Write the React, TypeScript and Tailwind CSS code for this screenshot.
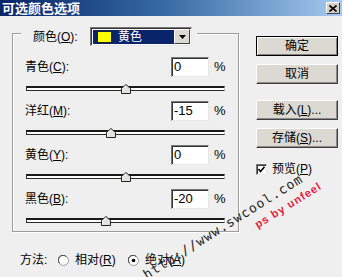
import React from "react";

const cjk = "font-['Liberation_Sans','Noto_Sans_CJK_SC',sans-serif]";

function Mn({ c }: { c: string }) {
  return <span className="underline underline-offset-[1px]">{c}</span>;
}

function Thumb({ value }: { value: number }) {
  // track spans -100..100
  const left = Math.round(((value + 100) / 200) * 197) - 5;
  return (
    <svg
      className="absolute top-[-4px]"
      style={{ left }}
      width="10"
      height="10"
      viewBox="0 0 10 10"
    >
      <polygon points="0.5,9.5 0.5,4.5 5,0.5 9.5,4.5 9.5,9.5" fill="#e4e2dc" stroke="#222" />
      <polyline points="1.5,8.5 1.5,5 5,1.8" fill="none" stroke="#fff" />
    </svg>
  );
}

function SliderRow({
  label,
  mn,
  value,
  last,
}: {
  label: string;
  mn: string;
  value: number;
  last?: boolean;
}) {
  return (
    <div>
      <div className="flex h-[20px] items-center">
        <div className="w-[146px] text-[12px] leading-none text-black">
          {label}(<Mn c={mn} />):
        </div>
        <div className="flex h-[20px] w-[38px] items-center border border-t-[#777] border-l-[#777] border-r-[#e6e6e6] border-b-[#e6e6e6] bg-white pl-[2px] font-['Liberation_Sans',sans-serif] text-[13px] text-black shadow-[inset_1px_1px_0_#333]">
          {value}
        </div>
        <span className="ml-[5px] font-['Liberation_Sans',sans-serif] text-[13px] text-black">%</span>
      </div>
      <div className={last ? "h-[22px] pt-[9px]" : "h-[24px] pt-[9px]"}>
        <div className="relative ml-[1px] h-[5px] w-[199px] border-t-2 border-b border-l border-r border-t-[#1a1a1a] border-b-[#2a2a2a] border-l-[#333] border-r-[#ccc] bg-white">
          <Thumb value={value} />
        </div>
      </div>
    </div>
  );
}

function Btn({ children, primary }: { children: React.ReactNode; primary?: boolean }) {
  return (
    <div
      className={
        "flex h-[20px] w-[82px] items-center justify-center bg-[#dcd9d2] text-[12px] text-black " +
        (primary
          ? "border border-black shadow-[inset_1px_1px_0_#fff,inset_-1px_-1px_0_#808080]"
          : "border border-t-white border-l-white border-r-[#404040] border-b-[#404040] shadow-[inset_-1px_-1px_0_#8a8a8a]")
      }
    >
      {children}
    </div>
  );
}

function Radio({ on }: { on?: boolean }) {
  return (
    <svg width="11" height="11" viewBox="0 0 11 11">
      <circle cx="5.5" cy="5.5" r="5" fill="#fff" stroke="#9a9a9a" />
      <path d="M1.6 8.2 A4.3 4.3 0 0 1 8.2 1.6" fill="none" stroke="#404040" />
      {on && <circle cx="5.5" cy="5.5" r="1.8" fill="#000" />}
    </svg>
  );
}

export default function App() {
  return (
    <div className={`relative h-[277px] w-[342px] overflow-hidden bg-[#efefef] ${cjk}`}>
      {/* title bar */}
      <div className="flex h-[16px] items-center justify-between bg-gradient-to-r from-[#0a246a] via-[#3a6ea5] to-[#a6caf0] pl-[2px] pr-[2px]">
        <span className="text-[13px] font-bold leading-none text-white">可选颜色选项</span>
        <div className="flex h-[12px] w-[14px] items-center justify-center border border-t-white border-l-white border-r-[#404040] border-b-[#404040] bg-[#d4d0c8]">
          <svg width="8" height="7" viewBox="0 0 8 7">
            <path d="M0.5 0.5 L7.5 6.5 M7.5 0.5 L0.5 6.5" stroke="#000" strokeWidth="1.6" />
          </svg>
        </div>
      </div>

      <div className="flex">
        {/* left column */}
        <div>
          <div className="ml-[12px] mt-[17px] h-[199px] w-[227px] border border-[#9c9c9c] shadow-[inset_1px_1px_0_#fff,1px_1px_0_#fff] pl-[12px]">
            <div className="-mt-[7px] -ml-[4px] flex w-fit items-center bg-[#efefef] pl-[12px] pr-[5px]">
              <div className="w-[57px] text-[12px] leading-none text-black">
                颜色(<Mn c="O" />):
              </div>
              <div className="flex h-[19px] w-[102px] items-center border border-t-[#777] border-l-[#777] border-r-[#e6e6e6] border-b-[#e6e6e6] bg-white pl-[2px] pr-[1px] shadow-[inset_1px_1px_0_#333]">
                <div className="flex h-[14px] flex-1 items-center bg-[#0a246a] pl-[4px]">
                  <div className="h-[12px] w-[15px] border border-[#222] bg-[#ffff00]" />
                  <span className="ml-[6px] text-[12px] leading-none text-white">黄色</span>
                </div>
                <div className="flex h-[15px] w-[16px] items-center justify-center border border-t-white border-l-white border-r-[#404040] border-b-[#404040] bg-[#dcd9d2]">
                  <svg width="7" height="4" viewBox="0 0 7 4">
                    <polygon points="0,0 7,0 3.5,4" fill="#000" />
                  </svg>
                </div>
              </div>
            </div>
            <div className="mt-[11px]">
              <SliderRow label="青色" mn="C" value={0} />
              <SliderRow label="洋红" mn="M" value={-15} />
              <SliderRow label="黄色" mn="Y" value={0} />
              <SliderRow label="黑色" mn="B" value={-20} last />
            </div>
          </div>

          <div className="ml-[20px] mt-[21px] flex h-[14px] items-center text-[12px] leading-none text-black">
            <span className="w-[38px]">方法:</span>
            <Radio />
            <span className="ml-[6px] w-[53px]">
              相对(<Mn c="R" />)
            </span>
            <Radio on />
            <span className="ml-[6px]">
              绝对(<Mn c="A" />)
            </span>
          </div>
        </div>

        {/* right column */}
        <div className="ml-[17px] mt-[20px] flex flex-col">
          <Btn primary>确定</Btn>
          <div className="mt-[8px]">
            <Btn>取消</Btn>
          </div>
          <div className="mt-[16px]">
            <Btn>
              载入(<Mn c="L" />)...
            </Btn>
          </div>
          <div className="mt-[8px]">
            <Btn>
              存储(<Mn c="S" />)...
            </Btn>
          </div>
          <div className="mt-[15px] flex items-center text-[12px] leading-none text-black">
            <div className="flex h-[11px] w-[11px] items-center justify-center border border-t-[#777] border-l-[#777] border-r-[#e6e6e6] border-b-[#e6e6e6] bg-white shadow-[inset_1px_1px_0_#333]">
              <svg width="7" height="7" viewBox="0 0 7 7">
                <path d="M0.5 3 L2.5 5.5 L6.5 0.8" fill="none" stroke="#000" strokeWidth="1.6" />
              </svg>
            </div>
            <span className="ml-[5px]">
              预览(<Mn c="P" />)
            </span>
          </div>
        </div>
      </div>

      {/* watermark */}
      <div className="pointer-events-none absolute left-[128px] top-[219px] w-[190px] -rotate-[32deg] whitespace-nowrap text-center font-['DejaVu_Sans_Mono',monospace] text-[13px] leading-[15px] tracking-[1px] text-[#222]">
        http://www.swcool.com
      </div>
      <div className="pointer-events-none absolute left-[246px] top-[198px] w-[84px] -rotate-[32deg] whitespace-nowrap text-center font-['Liberation_Sans',sans-serif] text-[11px] font-bold leading-[14px] tracking-[1px] text-[#e8203a]">
        ps by unfeel
      </div>
    </div>
  );
}
